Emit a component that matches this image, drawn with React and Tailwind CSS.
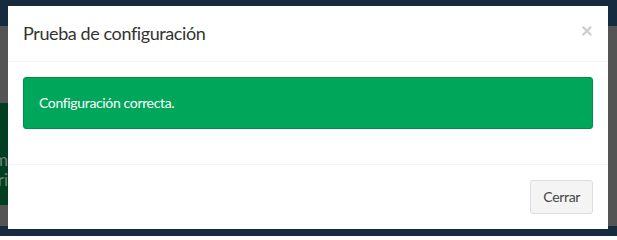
import { useState } from 'react'

// Backdrop page (dimmed) with the "Prueba de configuración" modal on top.
function Backdrop() {
  return (
    <div className="flex h-full w-full flex-col bg-[#545454]">
      <div className="h-[26px] shrink-0 bg-[#172b40]" />
      <div className="h-[77px] shrink-0" />
      <div className="h-[102px] w-[300px] shrink-0 bg-[#013f22] pt-[47px] text-[17px] leading-[20px] text-[#6e8276]">
        <div className="flex w-[8px] justify-end overflow-hidden whitespace-nowrap">Sum</div>
        <div className="flex w-[8px] justify-end overflow-hidden whitespace-nowrap">Vari</div>
      </div>
      <div className="h-[21px] shrink-0" />
      <div className="flex-1 bg-[#172b40]" />
    </div>
  )
}

export default function App() {
  const [open, setOpen] = useState(true)

  return (
    <div
      className="relative h-[236px] w-[617px] overflow-hidden"
      style={{ fontFamily: 'Lato, "Noto Sans", sans-serif' }}
    >
      <Backdrop />

      {open && (
        <div className="absolute left-[8px] top-[6px] w-[600px] bg-white text-[#333]">
          {/* header */}
          <div className="flex items-start justify-between border-b border-[#f4f4f4] p-[15px]">
            <h4 className="text-[18px] leading-[25px] tracking-[-0.4px] text-[#333]">Prueba de configuración</h4>
            <button
              onClick={() => setOpen(false)}
              className="-mt-[2px] text-[21px] font-bold leading-none text-[#cccccc]"
            >
              ×
            </button>
          </div>

          {/* body */}
          <div className="p-[15px]">
            <div className="mb-[20px] rounded-[3px] border border-[#008d4c] bg-[#00a65a] p-[15px] text-[14px] leading-[20px] tracking-[-0.35px] text-white">
              Configuración correcta.
            </div>
          </div>

          {/* footer */}
          <div className="flex justify-end border-t border-[#f4f4f4] p-[15px]">
            <button
              onClick={() => setOpen(false)}
              className="h-[34px] rounded-[3px] border border-[#ddd] bg-[#f4f4f4] px-[12px] text-[14px] leading-[20px] tracking-[-0.35px] text-[#444]"
            >
              Cerrar
            </button>
          </div>
        </div>
      )}
    </div>
  )
}
